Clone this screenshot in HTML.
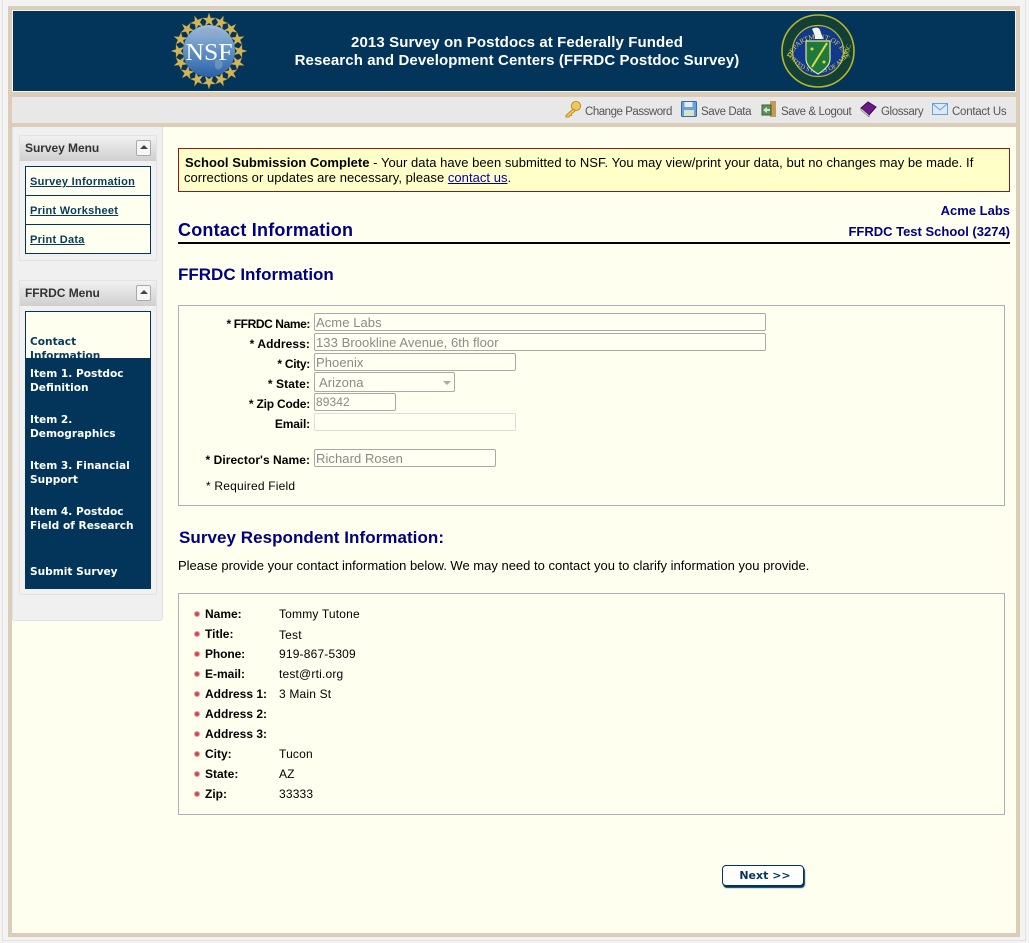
<!DOCTYPE html>
<html lang="en"><head><meta charset="utf-8"><title>Contact Information</title>
<style>
html,body{margin:0;padding:0}
body{width:1029px;height:943px;position:relative;overflow:hidden;background:#f3f3f3;font-family:"Liberation Sans",Arial,sans-serif;color:#000}
.a{position:absolute;white-space:nowrap}
.b{font-weight:bold}
.nav{color:#063a5e;font-size:11px;font-weight:bold;letter-spacing:.27px;text-decoration:underline}
.it{color:#fff;font-family:"DejaVu Sans",sans-serif;font-size:10.6px;font-weight:bold;line-height:14px;left:30px}
.lb{font-size:12px;font-weight:bold;text-align:right;right:719px;line-height:14px}
.in{border:1px solid #a9a9a9;border-radius:2px;box-sizing:border-box;height:18px;left:314px;color:#8a8a8a;font-size:13px;line-height:17px;padding-left:1px;background:#fffff2;letter-spacing:.07px}
.k{font-size:12px;font-weight:bold;left:205px;line-height:14px}
.v{font-size:12px;left:279px;line-height:14px;letter-spacing:.18px}
.d{position:absolute;left:194px;width:4px;height:4px;border-radius:50%;background:#cf4a50;border:1px solid #e99a9c}
.tb{font-size:11.5px;color:#555;line-height:14px;top:105px;letter-spacing:-.4px}
.hd{height:25px;background:linear-gradient(#f1f1f1,#cfcfcf);left:20px;width:136px}
.hdt{font-size:12px;font-weight:bold;color:#333;left:25px;letter-spacing:-.05px}
.tg{left:136px;width:13px;height:14px;border:1px solid #aaa;border-radius:2px;background:#f6f6f6}
.tg:after{content:"";position:absolute;left:3px;top:4px;border-left:4px solid transparent;border-right:4px solid transparent;border-bottom:4px solid #444}
</style></head><body>
<!-- frame -->
<div class="a" style="left:2px;top:0;width:1024px;height:941px;border:1px solid #e2e2e2;border-top:0;box-sizing:border-box"></div>
<div class="a" style="left:8px;top:6px;width:1012px;height:931px;background:#dccdb8"></div>
<div class="a" style="left:12px;top:10px;width:1004px;height:82px;background:#03355b;border:1px solid #f4f4f4;box-sizing:border-box"></div>
<div class="a" style="left:12px;top:97px;width:1004px;height:26px;background:#e8e8e8"></div>
<div class="a" style="left:12px;top:127px;width:1004px;height:806px;background:#ffffef"></div>

<!-- NSF logo -->
<svg class="a" style="left:170px;top:12px" width="78" height="78" viewBox="-39 -39 78 78">
<g fill="#d2b558" stroke="#a98a35" stroke-width=".3">
<polygon points="0,-38 1.6,-33 6.5,-33 2.6,-30 4,-25 0,-28 -4,-25 -2.6,-30 -6.5,-33 -1.6,-33"/>
<polygon transform="rotate(22.5)" points="0,-38 1.6,-33 6.5,-33 2.6,-30 4,-25 0,-28 -4,-25 -2.6,-30 -6.5,-33 -1.6,-33"/>
<polygon transform="rotate(45)" points="0,-38 1.6,-33 6.5,-33 2.6,-30 4,-25 0,-28 -4,-25 -2.6,-30 -6.5,-33 -1.6,-33"/>
<polygon transform="rotate(67.5)" points="0,-38 1.6,-33 6.5,-33 2.6,-30 4,-25 0,-28 -4,-25 -2.6,-30 -6.5,-33 -1.6,-33"/>
<polygon transform="rotate(90)" points="0,-38 1.6,-33 6.5,-33 2.6,-30 4,-25 0,-28 -4,-25 -2.6,-30 -6.5,-33 -1.6,-33"/>
<polygon transform="rotate(112.5)" points="0,-38 1.6,-33 6.5,-33 2.6,-30 4,-25 0,-28 -4,-25 -2.6,-30 -6.5,-33 -1.6,-33"/>
<polygon transform="rotate(135)" points="0,-38 1.6,-33 6.5,-33 2.6,-30 4,-25 0,-28 -4,-25 -2.6,-30 -6.5,-33 -1.6,-33"/>
<polygon transform="rotate(157.5)" points="0,-38 1.6,-33 6.5,-33 2.6,-30 4,-25 0,-28 -4,-25 -2.6,-30 -6.5,-33 -1.6,-33"/>
<polygon transform="rotate(180)" points="0,-38 1.6,-33 6.5,-33 2.6,-30 4,-25 0,-28 -4,-25 -2.6,-30 -6.5,-33 -1.6,-33"/>
<polygon transform="rotate(202.5)" points="0,-38 1.6,-33 6.5,-33 2.6,-30 4,-25 0,-28 -4,-25 -2.6,-30 -6.5,-33 -1.6,-33"/>
<polygon transform="rotate(225)" points="0,-38 1.6,-33 6.5,-33 2.6,-30 4,-25 0,-28 -4,-25 -2.6,-30 -6.5,-33 -1.6,-33"/>
<polygon transform="rotate(247.5)" points="0,-38 1.6,-33 6.5,-33 2.6,-30 4,-25 0,-28 -4,-25 -2.6,-30 -6.5,-33 -1.6,-33"/>
<polygon transform="rotate(270)" points="0,-38 1.6,-33 6.5,-33 2.6,-30 4,-25 0,-28 -4,-25 -2.6,-30 -6.5,-33 -1.6,-33"/>
<polygon transform="rotate(292.5)" points="0,-38 1.6,-33 6.5,-33 2.6,-30 4,-25 0,-28 -4,-25 -2.6,-30 -6.5,-33 -1.6,-33"/>
<polygon transform="rotate(315)" points="0,-38 1.6,-33 6.5,-33 2.6,-30 4,-25 0,-28 -4,-25 -2.6,-30 -6.5,-33 -1.6,-33"/>
<polygon transform="rotate(337.5)" points="0,-38 1.6,-33 6.5,-33 2.6,-30 4,-25 0,-28 -4,-25 -2.6,-30 -6.5,-33 -1.6,-33"/>
</g>
<defs><linearGradient id="gl" x1="0" y1="0" x2="0" y2="1"><stop offset="0" stop-color="#9dbcd8"/><stop offset=".55" stop-color="#5a8cc2"/><stop offset="1" stop-color="#2a62a8"/></linearGradient></defs>
<circle r="26" fill="url(#gl)"/>
<path d="M-10-21C-3-24 8-23 14-18 9-14 2-13-4-15-7-17-9-18-10-21ZM6 9C12 8 15 11 13 16 10 20 7 19 6 15Z" fill="#8aa8c6" opacity=".55"/>
<text x="0" y="9" text-anchor="middle" font-family="Liberation Serif,serif" font-size="24" fill="#fff" textLength="47" lengthAdjust="spacingAndGlyphs">NSF</text>
</svg>

<!-- DOE seal -->
<svg class="a" style="left:780px;top:13px" width="76" height="76" viewBox="-38 -38 76 76">
<circle r="36" fill="#123f36" stroke="#b9b52d" stroke-width="1.6"/>
<circle r="25.5" fill="#10398a" stroke="#b9b52d" stroke-width="1.2"/>
<defs><path id="u" d="M-27.5 8A28.8 28.8 0 0 1 27.5 8"/><path id="l" d="M-33 -6A33.5 33.5 0 0 0 33 -6"/></defs>
<text font-family="Liberation Serif,serif" font-size="7" fill="#d8d25a"><textPath href="#u" startOffset="1">DEPARTMENT OF ENERGY</textPath></text>
<text font-family="Liberation Serif,serif" font-size="6.5" fill="#d8d25a"><textPath href="#l" startOffset="8">UNITED STATES OF AMERICA</textPath></text>
<path d="M-3-12C-3-16-5-20-6-22-3-24 1-24 2-21 3-18 4-15 5-12Z" fill="#f2f2ee"/>
<path d="M-12-10H12V8C12 15 5 20 0 23-5 20-12 15-12 8Z" fill="#1e7a3a" stroke="#e6e2a0" stroke-width="1.2"/>
<path d="M9-8L-6 16" stroke="#e2d84c" stroke-width="2"/>
<circle cx="-6" cy="-2" r="1.5" fill="#e2d84c"/><circle cx="6" cy="11" r="1.5" fill="#e2d84c"/>
</svg>

<div class="a b" style="left:0;width:1034px;text-align:center;top:34px;font-size:15px;line-height:17px;color:#fff;letter-spacing:.1px">2013 Survey on Postdocs at Federally Funded</div>
<div class="a b" style="left:0;width:1034px;text-align:center;top:52px;font-size:15px;line-height:17px;color:#fff;letter-spacing:.1px">Research and Development Centers (FFRDC Postdoc Survey)</div>

<!-- toolbar -->
<svg class="a" style="left:564px;top:100px" width="18" height="18" viewBox="0 0 18 18"><circle cx="12" cy="6" r="4.6" fill="#f1c65e" stroke="#c08f2a"/><path d="M9 9L2 15.5V17H5L6 15.5H7.5V14L11.5 10.5Z" fill="#f1c65e" stroke="#c08f2a"/></svg>
<div class="a tb" style="left:585px;letter-spacing:-.47px">Change Password</div>
<svg class="a" style="left:681px;top:101px" width="16" height="16" viewBox="0 0 16 16"><rect x=".5" y=".5" width="15" height="15" rx="1" fill="#6f9fd8" stroke="#3a6aa8"/><rect x="3.5" y="1" width="8" height="5" fill="#e6eef8"/><rect x="3" y="9" width="10" height="6" fill="#d3e6c8"/></svg>
<div class="a tb" style="left:701px">Save Data</div>
<svg class="a" style="left:761px;top:101px" width="16" height="16" viewBox="0 0 16 16"><rect x="9" y="0" width="6" height="16" fill="#c49a58"/><rect x="1" y="4" width="9" height="10" fill="#5f8f5a" stroke="#38603a"/><path d="M2 9L6 6V8H9V10H6V12Z" fill="#cfe8c4"/></svg>
<div class="a tb" style="left:781px">Save &amp; Logout</div>
<svg class="a" style="left:860px;top:101px" width="17" height="16" viewBox="0 0 17 16"><path d="M1 7L8 1L16 6L9 14Z" fill="#6d1a86" stroke="#3a0c4c"/><path d="M1 7L9 14V16L1 9Z" fill="#ddd" stroke="#333" stroke-width=".5"/></svg>
<div class="a tb" style="left:881px">Glossary</div>
<svg class="a" style="left:932px;top:103px" width="16" height="12" viewBox="0 0 16 12"><rect x=".5" y=".5" width="15" height="11" fill="#dbe9fa" stroke="#6f9fd8"/><path d="M1 1L8 7L15 1" fill="none" stroke="#6f9fd8"/></svg>
<div class="a tb" style="left:952px;letter-spacing:-.25px">Contact Us</div>

<!-- sidebar -->
<div class="a" style="left:12px;top:127px;width:151px;height:494px;background:#f0f0f0;border:1px solid #e0e0e0;border-top:0;border-radius:0 0 3px 3px;box-sizing:border-box"></div>
<div class="a" style="left:19px;top:135px;width:138px;height:126px;border:1px solid #e2e2e2;box-sizing:border-box"></div>
<div class="a hd" style="top:136px"></div>
<div class="a hdt" style="top:141px">Survey Menu</div>
<div class="a tg" style="top:140px"></div>
<div class="a" style="left:25px;top:166px;width:126px;height:88px;background:#ffffef;border:1px solid #03355b;box-sizing:border-box"></div>
<div class="a" style="left:25px;top:195px;width:126px;height:1px;background:#03355b"></div>
<div class="a" style="left:25px;top:224px;width:126px;height:1px;background:#03355b"></div>
<div class="a nav" style="left:30px;top:176px">Survey Information</div>
<div class="a nav" style="left:30px;top:205px">Print Worksheet</div>
<div class="a nav" style="left:30px;top:234px">Print Data</div>

<div class="a" style="left:19px;top:280px;width:138px;height:315px;border:1px solid #e2e2e2;box-sizing:border-box"></div>
<div class="a hd" style="top:281px"></div>
<div class="a hdt" style="top:286px">FFRDC Menu</div>
<div class="a tg" style="top:285px"></div>
<div class="a" style="left:25px;top:311px;width:126px;height:278px;background:#03355b"></div>
<div class="a" style="left:26px;top:312px;width:124px;height:46px;background:#ffffef;overflow:hidden"></div>
<div class="a it" style="top:335px;color:#063a5e;height:23px;overflow:hidden">Contact<br>Information</div>
<div class="a it" style="top:367px">Item 1. Postdoc<br>Definition</div>
<div class="a it" style="top:413px">Item 2.<br>Demographics</div>
<div class="a it" style="top:459px">Item 3. Financial<br>Support</div>
<div class="a it" style="top:505px">Item 4. Postdoc<br>Field of Research</div>
<div class="a it" style="top:565px">Submit Survey</div>

<!-- alert -->
<div class="a" style="left:178px;top:148px;width:832px;height:44px;background:#ffffc8;border:1px solid #8b1a1a;box-sizing:border-box"></div>
<div class="a" style="left:185px;top:155px;font-size:13px;line-height:16px;letter-spacing:.04px"><b>School Submission Complete</b> - Your data have been submitted to NSF. You may view/print your data, but no changes may be made. If</div>
<div class="a" style="left:184px;top:170px;font-size:13px;line-height:16px;letter-spacing:.04px">corrections or updates are necessary, please <span style="color:#00a;text-decoration:underline">contact us</span>.</div>

<!-- heading -->
<div class="a b" style="left:178px;top:220px;font-size:18px;line-height:21px;color:#000080;letter-spacing:.22px">Contact Information</div>
<div class="a b" style="right:19px;top:203px;font-size:13px;line-height:15px;color:#000080">Acme Labs</div>
<div class="a b" style="right:19px;top:224px;font-size:13px;line-height:15px;color:#000080">FFRDC Test School (3274)</div>
<div class="a" style="left:178px;top:242px;width:832px;height:2px;background:#000"></div>
<div class="a b" style="left:178px;top:265px;font-size:17px;line-height:19px;color:#000080">FFRDC Information</div>

<!-- FFRDC box -->
<div class="a" style="left:178px;top:305px;width:827px;height:201px;border:1px solid #a9b0b8;box-sizing:border-box"></div>
<div class="a lb" style="top:317px;letter-spacing:-.4px">* FFRDC Name:</div>
<div class="a in" style="top:313px;width:452px">Acme Labs</div>
<div class="a lb" style="top:337px;letter-spacing:.08px">* Address:</div>
<div class="a in" style="top:333px;width:452px">133 Brookline Avenue, 6th floor</div>
<div class="a lb" style="top:357px;letter-spacing:-.3px">* City:</div>
<div class="a in" style="top:353px;width:202px">Phoenix</div>
<div class="a lb" style="top:377px;letter-spacing:.1px">* State:</div>
<div class="a in" style="top:372px;width:141px;height:20px;line-height:19px;padding-left:4px">Arizona<span style="position:absolute;left:128px;top:8px;border-left:4px solid transparent;border-right:4px solid transparent;border-top:4px solid #aaa"></span></div>
<div class="a lb" style="top:397px;letter-spacing:-.2px">* Zip Code:</div>
<div class="a in" style="top:393px;width:82px;font-size:12px;line-height:16px">89342</div>
<div class="a lb" style="top:417px;letter-spacing:-.15px">Email:</div>
<div class="a in" style="top:413px;width:202px;border-color:#ddd"></div>
<div class="a lb" style="top:453px;letter-spacing:.05px">* Director's Name:</div>
<div class="a in" style="top:449px;width:182px">Richard Rosen</div>
<div class="a" style="left:206px;top:479px;font-size:12px;line-height:14px;letter-spacing:.2px">* Required Field</div>

<!-- respondent -->
<div class="a b" style="left:179px;top:528px;font-size:17px;line-height:19px;color:#000080;letter-spacing:.05px">Survey Respondent Information:</div>
<div class="a" style="left:178px;top:558px;font-size:13px;line-height:15px">Please provide your contact information below. We may need to contact you to clarify information you provide.</div>
<div class="a" style="left:178px;top:593px;width:827px;height:222px;border:1px solid #a9b0b8;box-sizing:border-box"></div>

<i class="d" style="top:611px"></i><div class="a k" style="top:607px">Name:</div><div class="a v" style="top:607px">Tommy Tutone</div>
<i class="d" style="top:631px"></i><div class="a k" style="top:627px">Title:</div><div class="a v" style="top:628px">Test</div>
<i class="d" style="top:651px"></i><div class="a k" style="top:647px;letter-spacing:-.1px">Phone:</div><div class="a v" style="top:647px">919-867-5309</div>
<i class="d" style="top:671px"></i><div class="a k" style="top:667px">E-mail:</div><div class="a v" style="top:667px">test@rti.org</div>
<i class="d" style="top:691px"></i><div class="a k" style="top:687px">Address 1:</div><div class="a v" style="top:687px">3 Main St</div>
<i class="d" style="top:711px"></i><div class="a k" style="top:707px">Address 2:</div>
<i class="d" style="top:731px"></i><div class="a k" style="top:727px">Address 3:</div>
<i class="d" style="top:751px"></i><div class="a k" style="top:747px">City:</div><div class="a v" style="top:747px">Tucon</div>
<i class="d" style="top:771px"></i><div class="a k" style="top:767px">State:</div><div class="a v" style="top:767px">AZ</div>
<i class="d" style="top:791px"></i><div class="a k" style="top:787px">Zip:</div><div class="a v" style="top:787px">33333</div>

<!-- next -->
<div class="a" style="left:722px;top:865px;width:82px;height:21px;box-sizing:border-box;background:#fff;border:1px solid #03355b;border-radius:4px;box-shadow:1px 2px 1px #03355b;color:#03355b;font-family:'DejaVu Sans',sans-serif;font-weight:bold;font-size:11px;line-height:20px;text-align:center;padding-left:4px">Next &gt;&gt;</div>
</body></html>
